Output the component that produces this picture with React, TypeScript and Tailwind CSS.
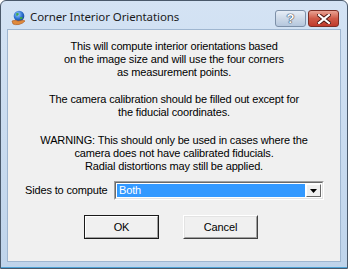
import React from "react";

const sans = { fontFamily: '"Liberation Sans", Arial, sans-serif' };

function TitleIcon() {
  return (
    <svg width="15" height="16" viewBox="0 0 15 16">
      <defs>
        <radialGradient id="g" cx="0.4" cy="0.35" r="0.7">
          <stop offset="0" stopColor="#9fd0ff" />
          <stop offset="0.6" stopColor="#2b6fd0" />
          <stop offset="1" stopColor="#123f8a" />
        </radialGradient>
      </defs>
      <circle cx="8" cy="6" r="5.3" fill="url(#g)" />
      <path d="M5 3.5 Q7 2.5 8 4 Q7 6 5.5 6 Z" fill="#3da84a" />
      <path d="M9 7 Q11 6.5 12 8 Q10 10 9 9 Z" fill="#3da84a" />
      <path d="M1 11 Q4 9.5 7 11 L11 10.5 Q13 10 14 11 Q12 13.5 8 14.5 Q4 15 2 14 Z" fill="#e08a3c" stroke="#a8551c" strokeWidth="0.6" />
    </svg>
  );
}

export default function App() {
  return (
    <div className="w-[348px] h-[269px] overflow-hidden bg-white">
      <div className="w-[348px] h-[269px] rounded-t-[6px] border border-[#4a596b] bg-gradient-to-b from-[#d4e3f4] to-[#bfd4eb] flex flex-col">
        {/* title bar */}
        <div className="h-[28px] flex items-start shrink-0">
          <div className="ml-[10px] mt-[9px]">
            <TitleIcon />
          </div>
          <div
            className="ml-[4px] mt-[8px] text-[11.5px] leading-[16px] text-[#1b1b1b] tracking-[-0.1px]"
            style={{ fontFamily: '"Noto Sans", "Open Sans", sans-serif' }}
          >
            Corner Interior Orientations
          </div>
          <div className="flex-1" />
          <div className="mt-[9px] w-[31px] h-[17px] rounded-[3px] border border-[#7d90a8] bg-gradient-to-b from-[#e7eef7] via-[#cdd9e8] to-[#b5c7dd] flex items-center justify-center">
            <span
              className="text-white font-bold text-[13px] leading-none [text-shadow:0_0_1px_#2a3a50,0_0_1px_#2a3a50,0_0_1px_#2a3a50]"
              style={sans}
            >
              ?
            </span>
          </div>
          <div className="mt-[9px] ml-[2px] mr-[8px] w-[31px] h-[17px] rounded-[3px] border border-[#7b2d24] bg-gradient-to-b from-[#e9a394] via-[#cf5a48] to-[#c0392b] flex items-center justify-center">
            <svg width="14" height="10" viewBox="0 0 14 10">
              <path d="M2 1 L12 9 M12 1 L2 9" stroke="#4a1510" strokeWidth="4" strokeLinecap="square" />
              <path d="M2 1 L12 9 M12 1 L2 9" stroke="#ffffff" strokeWidth="2.2" strokeLinecap="square" />
            </svg>
          </div>
        </div>

        {/* client */}
        <div className="mx-[6px] border border-[#9fb6d0] bg-[#f0f0f0] h-[233px] shrink-0 flex flex-col text-[11px] leading-[13px] tracking-[-0.15px] text-black" style={sans}>
          <div className="mt-[10px] text-center">
            <div>This will compute interior orientations based</div>
            <div>on the image size and will use the four corners</div>
            <div>as measurement points.</div>
          </div>
          <div className="mt-[14px] text-center">
            <div>The camera calibration should be filled out except for</div>
            <div>the fiducial coordinates.</div>
          </div>
          <div className="mt-[15px] text-center">
            <div>WARNING: This should only be used in cases where the</div>
            <div>camera does not have calibrated fiducials.</div>
            <div>Radial distortions may still be applied.</div>
          </div>

          <div className="mt-[8px] flex items-center">
            <div className="ml-[17px] w-[89px]">Sides to compute</div>
            <div className="w-[210px] h-[19px] border-t border-l border-[#a0a0a0] border-b border-r border-b-white border-r-white">
              <div className="w-full h-full border-t border-l border-[#696969] border-b border-r border-b-[#e3e3e3] border-r-[#e3e3e3] bg-white flex p-[1px]">
                <div className="flex-1 bg-[#3399ff] text-white pl-[2px] leading-[13px]">Both</div>
                <div className="ml-[1px] w-[15px] border-t border-l border-white border-b border-r border-b-[#696969] border-r-[#696969] bg-[#f0f0f0] flex items-center justify-center">
                  <svg width="7" height="4" viewBox="0 0 7 4">
                    <path d="M0 0 H7 L3.5 4 Z" fill="#000" />
                  </svg>
                </div>
              </div>
            </div>
          </div>

          <div className="mt-[15px] flex">
            <div className="ml-[76px] w-[75px] h-[24px] border border-[#1a1a1a]">
              <div className="w-full h-full border-t border-l border-white border-b border-r border-b-[#a0a0a0] border-r-[#a0a0a0] bg-[#f0f0f0] flex items-center justify-center">
                OK
              </div>
            </div>
            <div className="ml-[24px] w-[75px] h-[24px] border-t border-l border-white border-b border-r border-b-[#404040] border-r-[#404040]">
              <div className="w-full h-full border-t border-l border-[#e3e3e3] border-b border-r border-b-[#a0a0a0] border-r-[#a0a0a0] bg-[#f0f0f0] flex items-center justify-center">
                Cancel
              </div>
            </div>
          </div>
        </div>
        <div className="flex-1" />
        <div className="h-[1px] bg-[#4ea3d6]" />
      </div>
    </div>
  );
}
